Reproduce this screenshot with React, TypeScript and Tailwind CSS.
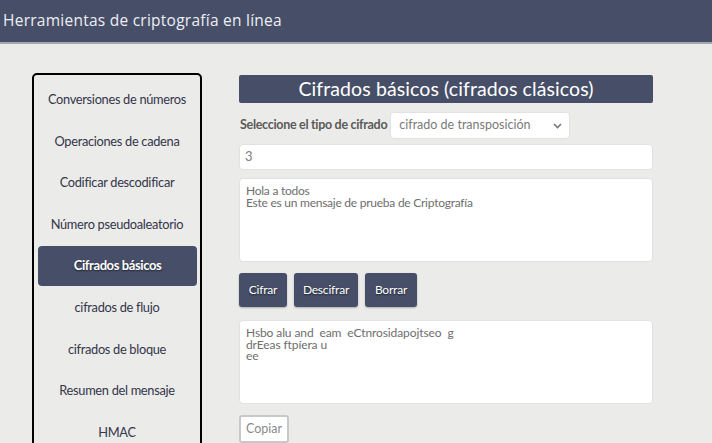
const NAV = [
  "Conversiones de números",
  "Operaciones de cadena",
  "Codificar descodificar",
  "Número pseudoaleatorio",
  "Cifrados básicos",
  "cifrados de flujo",
  "cifrados de bloque",
  "Resumen del mensaje",
  "HMAC",
];

function Sidebar() {
  return (
    <nav className="ml-[32px] mt-[29px] w-[170px] shrink-0 self-start rounded-[5px] border-2 border-black pt-[4px] pb-[20px] px-[4px]">
      {NAV.map((item) =>
        item === "Cifrados básicos" ? (
          <div
            key={item}
            className="my-[1px] mr-[-1px] flex h-[40px] items-center justify-center rounded-[4px] bg-[#474f68] text-[13px] font-bold tracking-[-0.4px] text-white [text-shadow:0_1px_2px_rgba(0,0,0,0.6)]"
          >
            {item}
          </div>
        ) : (
          <div
            key={item}
            className="flex h-[41.5px] items-center justify-center text-[12.8px] tracking-[-0.3px] text-[#34364a]"
          >
            {item}
          </div>
        ),
      )}
    </nav>
  );
}

function Btn({ label, w }: { label: string; w: string }) {
  return (
    <button
      className={`${w} h-[34px] rounded-[3px] bg-[#474f68] text-[12px] tracking-[-0.2px] text-white [text-shadow:0_1px_2px_rgba(0,0,0,0.6)] shadow-[0_1px_2px_rgba(0,0,0,0.25)]`}
    >
      {label}
    </button>
  );
}

export default function App() {
  return (
    <div className="h-[443px] w-[712px] overflow-hidden bg-[#ebebe9] font-['Lato',sans-serif]">
      {/* header */}
      <header className="flex h-[44px] items-center border-b-2 border-[#a3a7b3] bg-[#474f68] pl-[3px]">
        <span className="font-['Open_Sans',sans-serif] text-[15.5px] tracking-[0.25px] text-[#eceef3]">
          Herramientas de criptografía en línea
        </span>
      </header>

      <div className="flex">
        <Sidebar />

        <main className="ml-[37px] mt-[31px] flex w-[414px] flex-col">
          <h1 className="flex h-[28px] items-center justify-center rounded-[2px] bg-[#474f68] text-[19.5px] tracking-[0.1px] text-white">
            Cifrados básicos (cifrados clásicos)
          </h1>

          <div className="mt-[9px] flex h-[27px] items-center gap-[3px]">
            <span className="pl-[1px] text-[12.5px] font-bold tracking-[-0.3px] text-[#5a5a5a]">
              Seleccione el tipo de cifrado
            </span>
            <div className="flex h-[27px] w-[180px] items-center justify-between rounded-[4px] border border-[#e2e2e2] bg-white pl-[8px] pr-[7px]">
              <span className="text-[12.5px] text-[#7a7a7a]">
                cifrado de transposición
              </span>
              <svg width="9" height="6" viewBox="0 0 9 6">
                <path
                  d="M1 1l3.5 3.5L8 1"
                  fill="none"
                  stroke="#777"
                  strokeWidth="1.6"
                />
              </svg>
            </div>
          </div>

          <div className="mt-[5px] flex h-[26px] items-center rounded-[4px] border border-[#e2e2e2] bg-white pl-[5px] text-[13px] text-[#808080]">
            3
          </div>

          <div className="mt-[8px] h-[84px] whitespace-pre rounded-[4px] border border-[#e2e2e2] bg-white px-[6px] pt-[6px] text-[12px] leading-[12px] tracking-[-0.25px] text-[#6e6e6e]">
            {"Hola a todos\nEste es un mensaje de prueba de Criptografía"}
          </div>

          <div className="mt-[11px] flex gap-[7px]">
            <Btn label="Cifrar" w="w-[48px]" />
            <Btn label="Descifrar" w="w-[64px]" />
            <Btn label="Borrar" w="w-[52px]" />
          </div>

          <div className="mt-[13px] h-[84px] whitespace-pre rounded-[4px] border border-[#e2e2e2] bg-white px-[6px] pt-[6px] text-[12px] leading-[11.5px] tracking-[-0.1px] text-[#6e6e6e]">
            {"Hsbo alu and  eam  eCtnrosidapojtseo  g\ndrEeas ftpíera u\nee"}
          </div>

          <div className="mt-[11px]">
            <button className="h-[28px] w-[50px] rounded-[3px] border-2 border-[#c8c8c8] bg-white text-[12.5px] text-[#8a8a8a]">
              Copiar
            </button>
          </div>
        </main>
      </div>
    </div>
  );
}
